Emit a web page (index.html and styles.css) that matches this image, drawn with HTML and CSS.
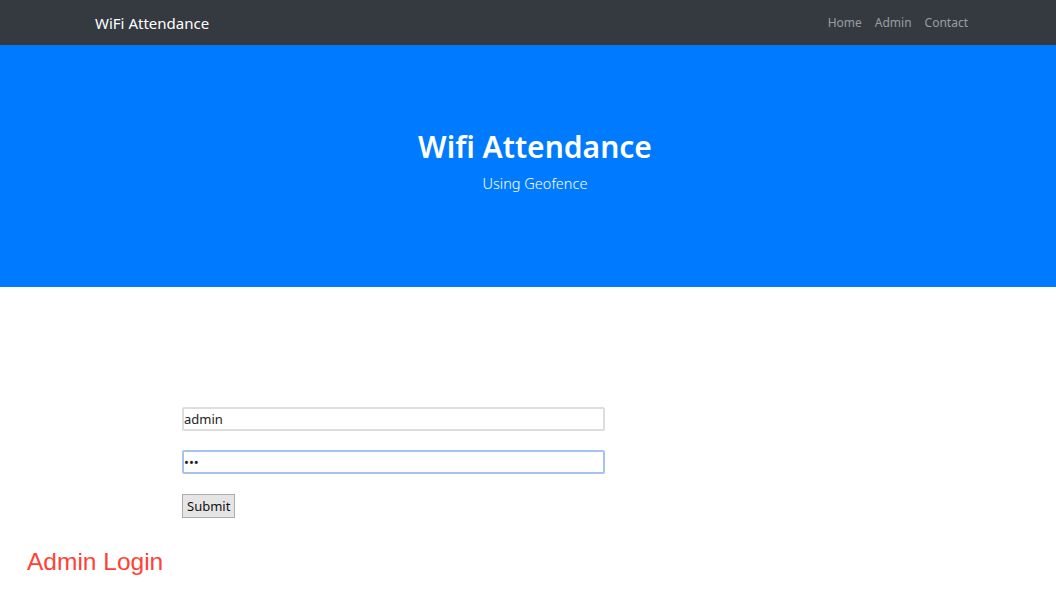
FILE: index.html
```html
<!DOCTYPE html>
<html lang="en">
<head>
  <meta charset="UTF-8">
  <meta name="viewport" content="width=device-width, initial-scale=1.0">
  <title>WiFi Attendance</title>
  <link rel="stylesheet" href="styles.css">
</head>
<body>
  <nav class="navbar">
    <a class="brand" href="#">WiFi Attendance</a>
    <div class="nav-links">
      <a href="#">Home</a>
      <a href="#">Admin</a>
      <a href="#">Contact</a>
    </div>
  </nav>

  <header class="hero">
    <h1>Wifi Attendance</h1>
    <p>Using Geofence</p>
  </header>

  <section class="login">
    <form class="login-form">
      <input type="text" value="admin">
      <input type="password" value="abc" class="focused">
      <button type="button">Submit</button>
    </form>
    <h2 class="login-title">Admin Login</h2>
  </section>
</body>
</html>
```

FILE: styles.css
```css
* {
  margin: 0;
  padding: 0;
  box-sizing: border-box;
}
body {
  font-family: 'Noto Sans', 'Open Sans', sans-serif;
  background: #fff;
  color: #212529;
}
.navbar {
  background: #343a40;
  height: 45px;
  padding: 0 88px 0 95px;
  display: flex;
  align-items: center;
  justify-content: space-between;
}
.brand {
  color: #fff;
  text-decoration: none;
  font-size: 15px;
}
.nav-links {
  display: flex;
  gap: 13px;
}
.nav-links a {
  color: rgba(255,255,255,0.5);
  text-decoration: none;
  font-size: 12px;
}
.hero {
  background: #007bff;
  height: 242px;
  color: #fff;
  text-align: center;
  padding: 82px 0 0 14px;
}
.hero h1 {
  font-size: 30px;
  font-weight: 600;
  line-height: 40px;
}
.hero p {
  font-size: 14.5px;
  font-weight: 300;
  margin-top: 6px;
}
.login {
  padding: 120px 0 0 27px;
}
.login-form {
  display: flex;
  flex-direction: column;
  align-items: flex-start;
  margin-left: 155px;
}
.login-form input {
  width: 423px;
  height: 24px;
  border: 2px solid #ddd;
  border-radius: 2px;
  padding: 0;
  font-family: 'Noto Sans', sans-serif;
  font-size: 13px;
  color: #222;
  margin-bottom: 19px;
}
.login-form input.focused {
  border-color: #a6c2f2;
  margin-bottom: 20px;
}
.login-form button {
  font-family: 'Noto Sans', sans-serif;
  font-size: 13px;
  padding: 2px 4px;
  height: 24px;
  background: #e5e5e5;
  border: 1px solid #adadad;
  color: #111;
}
.login-title {
  color: #ff4136;
  font-family: 'Liberation Sans', sans-serif;
  font-weight: 400;
  font-size: 24.5px;
  margin-top: 30px;
}
```
